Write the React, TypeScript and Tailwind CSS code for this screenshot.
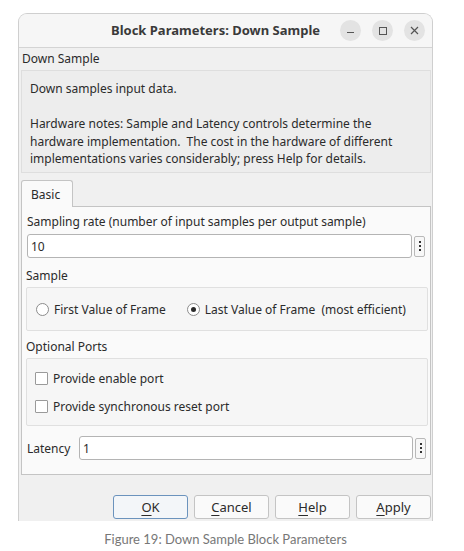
import type { ReactNode } from "react";

const ui = "font-['Noto_Sans',sans-serif] text-[12px] leading-[17px] text-[#2b2b2b]";

function DotsButton() {
  return (
    <button className="flex h-[21px] w-[11px] flex-col items-center justify-center gap-[2px] rounded-[2px] border border-[#b9b9b9] bg-[#f7f7f7]">
      <span className="h-[2px] w-[2px] bg-[#333]" />
      <span className="h-[2px] w-[2px] bg-[#333]" />
      <span className="h-[2px] w-[2px] bg-[#333]" />
    </button>
  );
}

function Radio({ checked, label }: { checked?: boolean; label: string }) {
  return (
    <label className="flex items-center gap-[5px] whitespace-pre">
      <span className="flex h-[13px] w-[13px] items-center justify-center rounded-full border border-[#8c8c8c] bg-white">
        {checked ? <span className="h-[5px] w-[5px] rounded-full bg-[#2b2b2b]" /> : null}
      </span>
      <span>{label}</span>
    </label>
  );
}

function Checkbox({ label }: { label: string }) {
  return (
    <label className="flex items-center gap-[5px] whitespace-nowrap">
      <span className="h-[13px] w-[13px] rounded-[1px] border border-[#9a9a9a] bg-white" />
      <span>{label}</span>
    </label>
  );
}

function WinButton({ children }: { children: ReactNode }) {
  return (
    <span className="flex h-[21px] w-[21px] items-center justify-center rounded-full bg-[#e3e3e3] text-[#444]">
      {children}
    </span>
  );
}

function DialogButton({ mnemonic, rest, primary }: { mnemonic: string; rest: string; primary?: boolean }) {
  return (
    <button
      className={
        primary
          ? "h-[24px] w-[75px] rounded-[3px] border border-[#6b93bd] bg-[#f3f6f9] text-[13px]"
          : "h-[24px] w-[75px] rounded-[3px] border border-[#c4c4c4] bg-[#fafafa] text-[13px]"
      }
    >
      <span className="underline underline-offset-[3px]">{mnemonic}</span>
      {rest}
    </button>
  );
}

export default function App() {
  return (
    <div className="min-h-[551px] w-[464px] bg-white">
      <div className={`${ui} ml-[18px] w-[415px] pt-[13px]`}>
        <div className="overflow-hidden rounded-t-[9px] border-x border-t border-[#cfcfcf] bg-[#f0f0f0]">
          {/* title bar */}
          <div className="flex h-[34px] items-center border-b border-[#d4d4d4] bg-[#f6f6f6]">
            <span className="ml-[92px] whitespace-nowrap text-[13px] font-bold text-[#3a3a3a]">Block Parameters: Down Sample</span>
            <div className="ml-auto mr-[7px] flex gap-[11px]">
              <WinButton>
                <span className="mt-[3px] h-[1px] w-[7px] bg-[#555]" />
              </WinButton>
              <WinButton>
                <span className="h-[8px] w-[8px] border border-[#555]" />
              </WinButton>
              <WinButton>
                <svg width="9" height="9" viewBox="0 0 9 9">
                  <path d="M1 1L8 8M8 1L1 8" stroke="#555" strokeWidth="1.2" />
                </svg>
              </WinButton>
            </div>
          </div>

          <div className="pl-[2px] pr-[1px] pt-[2px]">
            <div className="pl-[1px]">Down Sample</div>
            <div className="mt-[3px] h-[103px] border border-[#dedede] bg-[#ededed] pl-[8px] pt-[9px] leading-[17.5px]">
              <p>Down samples input data.</p>
              <p className="mt-[17.5px]">
                Hardware notes: Sample and Latency controls determine the
                <br />
                hardware implementation.&nbsp; The cost in the hardware of different
                <br />
                implementations varies considerably; press Help for details.
              </p>
            </div>

            {/* tabs */}
            <div className="mt-[7px]">
              <div className="relative z-10 -mb-px flex h-[27px] w-[52px] items-center rounded-t-[3px] border-x border-t border-[#c4c4c4] bg-[#fafafa] pl-[9px]">
                Basic
              </div>
              <div className="h-[269px] border border-[#c4c4c4] bg-[#fafafa] px-[4px] pt-[6px]">
                <div className="pl-px">Sampling rate (number of input samples per output sample)</div>
                <div className="mt-[4px] flex items-center gap-[2px] pl-[1px]">
                  <div className="flex h-[24px] w-[385px] items-center rounded-[3px] border border-[#b4b4b4] bg-white pl-[3px]">10</div>
                  <DotsButton />
                </div>
                <div className="mt-[9px]">Sample</div>
                <div className="mt-[3px] flex h-[44px] w-[402px] items-center gap-[21px] rounded-[2px] border border-[#e0e0e0] bg-[#f6f6f6] pl-[9px]">
                  <Radio label="First Value of Frame" />
                  <Radio checked label="Last Value of Frame  (most efficient)" />
                </div>
                <div className="mt-[7px]">Optional Ports</div>
                <div className="mt-[3px] flex h-[68px] w-[402px] flex-col justify-center gap-[11px] rounded-[2px] border border-[#e0e0e0] bg-[#f6f6f6] pl-[8px]">
                  <Checkbox label="Provide enable port" />
                  <Checkbox label="Provide synchronous reset port" />
                </div>
                <div className="mt-[10px] flex items-center gap-[2px] pl-[1px]">
                  <span className="w-[50px]">Latency</span>
                  <div className="flex h-[24px] w-[335px] items-center rounded-[3px] border border-[#b4b4b4] bg-white pl-[3px]">1</div>
                  <DotsButton />
                </div>
              </div>
            </div>

            {/* dialog buttons */}
            <div className="flex justify-end gap-[6px] pb-[2px] pt-[20px]">
              <DialogButton primary mnemonic="O" rest="K" />
              <DialogButton mnemonic="C" rest="ancel" />
              <DialogButton mnemonic="H" rest="elp" />
              <DialogButton mnemonic="A" rest="pply" />
            </div>
          </div>
        </div>
      </div>
      <p className="mt-[9px] w-[451px] text-center font-['Lato',sans-serif] text-[13px] text-[#777]">
        Figure 19: Down Sample Block Parameters
      </p>
    </div>
  );
}
